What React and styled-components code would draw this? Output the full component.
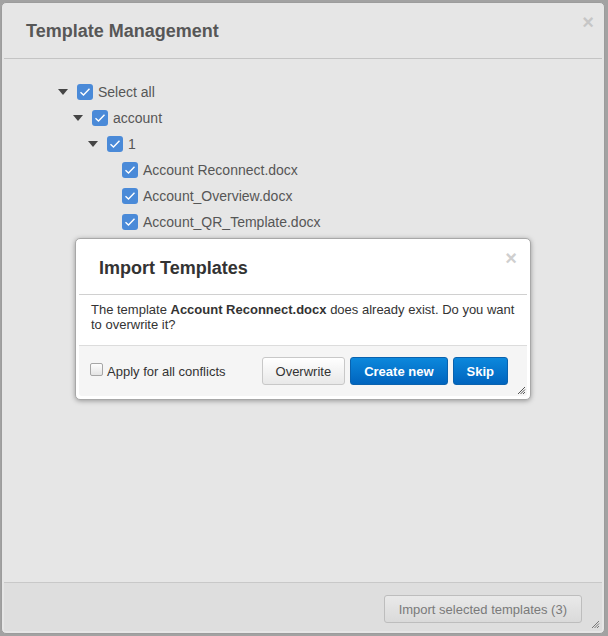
import React from "react";
import styled, { createGlobalStyle } from "styled-components";

const GlobalStyle = createGlobalStyle`
  html, body {
    margin: 0;
    padding: 0;
    background: #a2a2a2;
    font-family: "Liberation Sans", Arial, sans-serif;
  }
  #root {
    padding: 2px 3px 2px 1px;
  }
`;

const Dialog = styled.div`
  position: relative;
  width: 604px;
  height: 632px;
  box-sizing: border-box;
  padding: 2px;
  background: #e6e6e6;
  border: 1px solid #9c9c9c;
  border-radius: 5px;
  display: flex;
  flex-direction: column;
`;

const TitleBar = styled.div`
  position: relative;
  height: 53px;
  display: flex;
  align-items: center;
  padding-left: 22px;
  border-bottom: 1px solid #c4c4c4;
  flex-shrink: 0;
`;

const Title = styled.h2`
  margin: 0;
  font-size: 18px;
  font-weight: bold;
  color: ${(p) => (p.$dim ? "#575757" : "#333")};
`;

const CloseButton = styled.span`
  position: absolute;
  top: ${(p) => p.$top}px;
  right: ${(p) => p.$right}px;
  font-size: 20px;
  font-weight: bold;
  line-height: 1;
  color: ${(p) => (p.$dim ? "#c6c6c6" : "#cfcfcf")};
  cursor: pointer;
`;

const Body = styled.div`
  position: relative;
  flex: 1;
  padding: 20px 0 0 54px;
`;

const Tree = styled.ul`
  list-style: none;
  margin: 0;
  padding: 0;
`;

const Row = styled.li`
  height: 26px;
  display: flex;
  align-items: center;
  padding-left: ${(p) => p.$depth * 15}px;
  font-size: 14px;
  color: #565656;
`;

const Toggle = styled.span`
  width: 19px;
  flex-shrink: 0;
  display: flex;
  align-items: center;
  &::before {
    content: "";
    display: ${(p) => (p.$leaf ? "none" : "block")};
    width: 0;
    height: 0;
    border-left: 5.5px solid transparent;
    border-right: 5.5px solid transparent;
    border-top: 6px solid #454545;
  }
`;

const CheckBox = styled.span`
  width: 16px;
  height: 16px;
  border-radius: 3px;
  background: #4a8ad8;
  display: flex;
  align-items: center;
  justify-content: center;
  margin-right: 5px;
  flex-shrink: 0;
`;

const Footer = styled.div`
  position: relative;
  flex-shrink: 0;
  border-top: 1px solid #c8c8c8;
  background: #dedede;
  display: flex;
  justify-content: flex-end;
  align-items: flex-start;
  padding: 12px 20px 0 0;
  box-sizing: border-box;
  height: 49px;
`;

const GreyButton = styled.button`
  height: 28px;
  padding: 0 14px;
  font-family: inherit;
  font-size: 13px;
  color: #7a7a7a;
  background: linear-gradient(#e9e9e9, #dadada);
  border: 1px solid #bdbdbd;
  border-radius: 3px;
`;

const Resize = styled.svg`
  position: absolute;
  right: ${(p) => p.$right}px;
  bottom: ${(p) => p.$bottom}px;
`;

const Modal = styled.div`
  position: absolute;
  left: 73px;
  top: 235px;
  width: 456px;
  height: 162px;
  box-sizing: border-box;
  padding: 3px;
  background: #fff;
  border: 1px solid #a8a8a8;
  border-radius: 5px;
  box-shadow: 0 1px 5px rgba(0, 0, 0, 0.35);
  display: flex;
  flex-direction: column;
`;

const ModalTitleBar = styled(TitleBar)`
  height: 52px;
  padding-left: 20px;
  border-bottom-color: #d0d0d0;
`;

const Message = styled.p`
  margin: 0;
  flex: 1;
  padding: 7px 8px 0 12px;
  font-size: 13px;
  line-height: 15px;
  color: #333;
`;

const ModalFooter = styled.div`
  position: relative;
  height: 51px;
  box-sizing: border-box;
  border-top: 1px solid #dcdcdc;
  background: #f5f5f5;
  border-radius: 0 0 3px 3px;
  display: flex;
  align-items: center;
  padding: 0 19px 0 11px;
`;

const ApplyLabel = styled.label`
  display: flex;
  align-items: center;
  font-size: 13px;
  color: #333;
  flex: 1;
`;

const SmallBox = styled.span`
  width: 11px;
  height: 11px;
  border: 1px solid #a6a6a6;
  border-radius: 2px;
  background: linear-gradient(#fdfdfd, #e4e4e4);
  margin-right: 4px;
  margin-top: -4px;
`;

const Actions = styled.div`
  display: flex;
  gap: 5px;
`;

const Button = styled.button`
  height: 28px;
  padding: 0 13px;
  font-family: inherit;
  font-size: 13px;
  font-weight: ${(p) => (p.$primary ? "bold" : "normal")};
  color: ${(p) => (p.$primary ? "#fff" : "#333")};
  background: ${(p) =>
    p.$primary
      ? "linear-gradient(#0c88dc, #0064be)"
      : "linear-gradient(#ffffff, #e8e8e8)"};
  border: 1px solid ${(p) => (p.$primary ? "#0a62ae" : "#c8c8c8")};
  border-radius: 3px;
`;

const Check = () => (
  <svg width="12" height="10" viewBox="0 0 12 10">
    <path d="M1.5 5.2 L4.5 8 L10.5 1.8" fill="none" stroke="#fff" strokeWidth="1.4" />
  </svg>
);

const Grip = ({ right, bottom, color }) => (
  <Resize $right={right} $bottom={bottom} width="9" height="9" viewBox="0 0 9 9">
    <path d="M8 1 L1 8 M8 3.5 L3.5 8 M8 6 L6 8" stroke={color} strokeWidth="1" />
  </Resize>
);

const treeRows = [
  { depth: 0, label: "Select all" },
  { depth: 1, label: "account" },
  { depth: 2, label: "1" },
  { depth: 3, label: "Account Reconnect.docx", leaf: true },
  { depth: 3, label: "Account_Overview.docx", leaf: true },
  { depth: 3, label: "Account_QR_Template.docx", leaf: true },
];

export default function App() {
  return (
    <>
      <GlobalStyle />
      <Dialog>
        <TitleBar>
          <Title $dim>Template Management</Title>
          <CloseButton $dim $top={7} $right={8}>×</CloseButton>
        </TitleBar>
        <Body>
          <Tree>
            {treeRows.map((row) => (
              <Row key={row.label} $depth={row.depth}>
                <Toggle $leaf={row.leaf} />
                <CheckBox>
                  <Check />
                </CheckBox>
                {row.label}
              </Row>
            ))}
          </Tree>
        </Body>
        <Footer>
          <GreyButton>Import selected templates (3)</GreyButton>
          <Grip right={2} bottom={2} color="#777" />
        </Footer>

        <Modal>
          <ModalTitleBar>
            <Title>Import Templates</Title>
            <CloseButton $top={6} $right={10}>×</CloseButton>
          </ModalTitleBar>
          <Message>
            The template <b>Account Reconnect.docx</b> does already exist. Do you want to
            overwrite it?
          </Message>
          <ModalFooter>
            <ApplyLabel>
              <SmallBox />
              Apply for all conflicts
            </ApplyLabel>
            <Actions>
              <Button>Overwrite</Button>
              <Button $primary>Create new</Button>
              <Button $primary>Skip</Button>
            </Actions>
            <Grip right={1} bottom={1} color="#555" />
          </ModalFooter>
        </Modal>
      </Dialog>
    </>
  );
}
